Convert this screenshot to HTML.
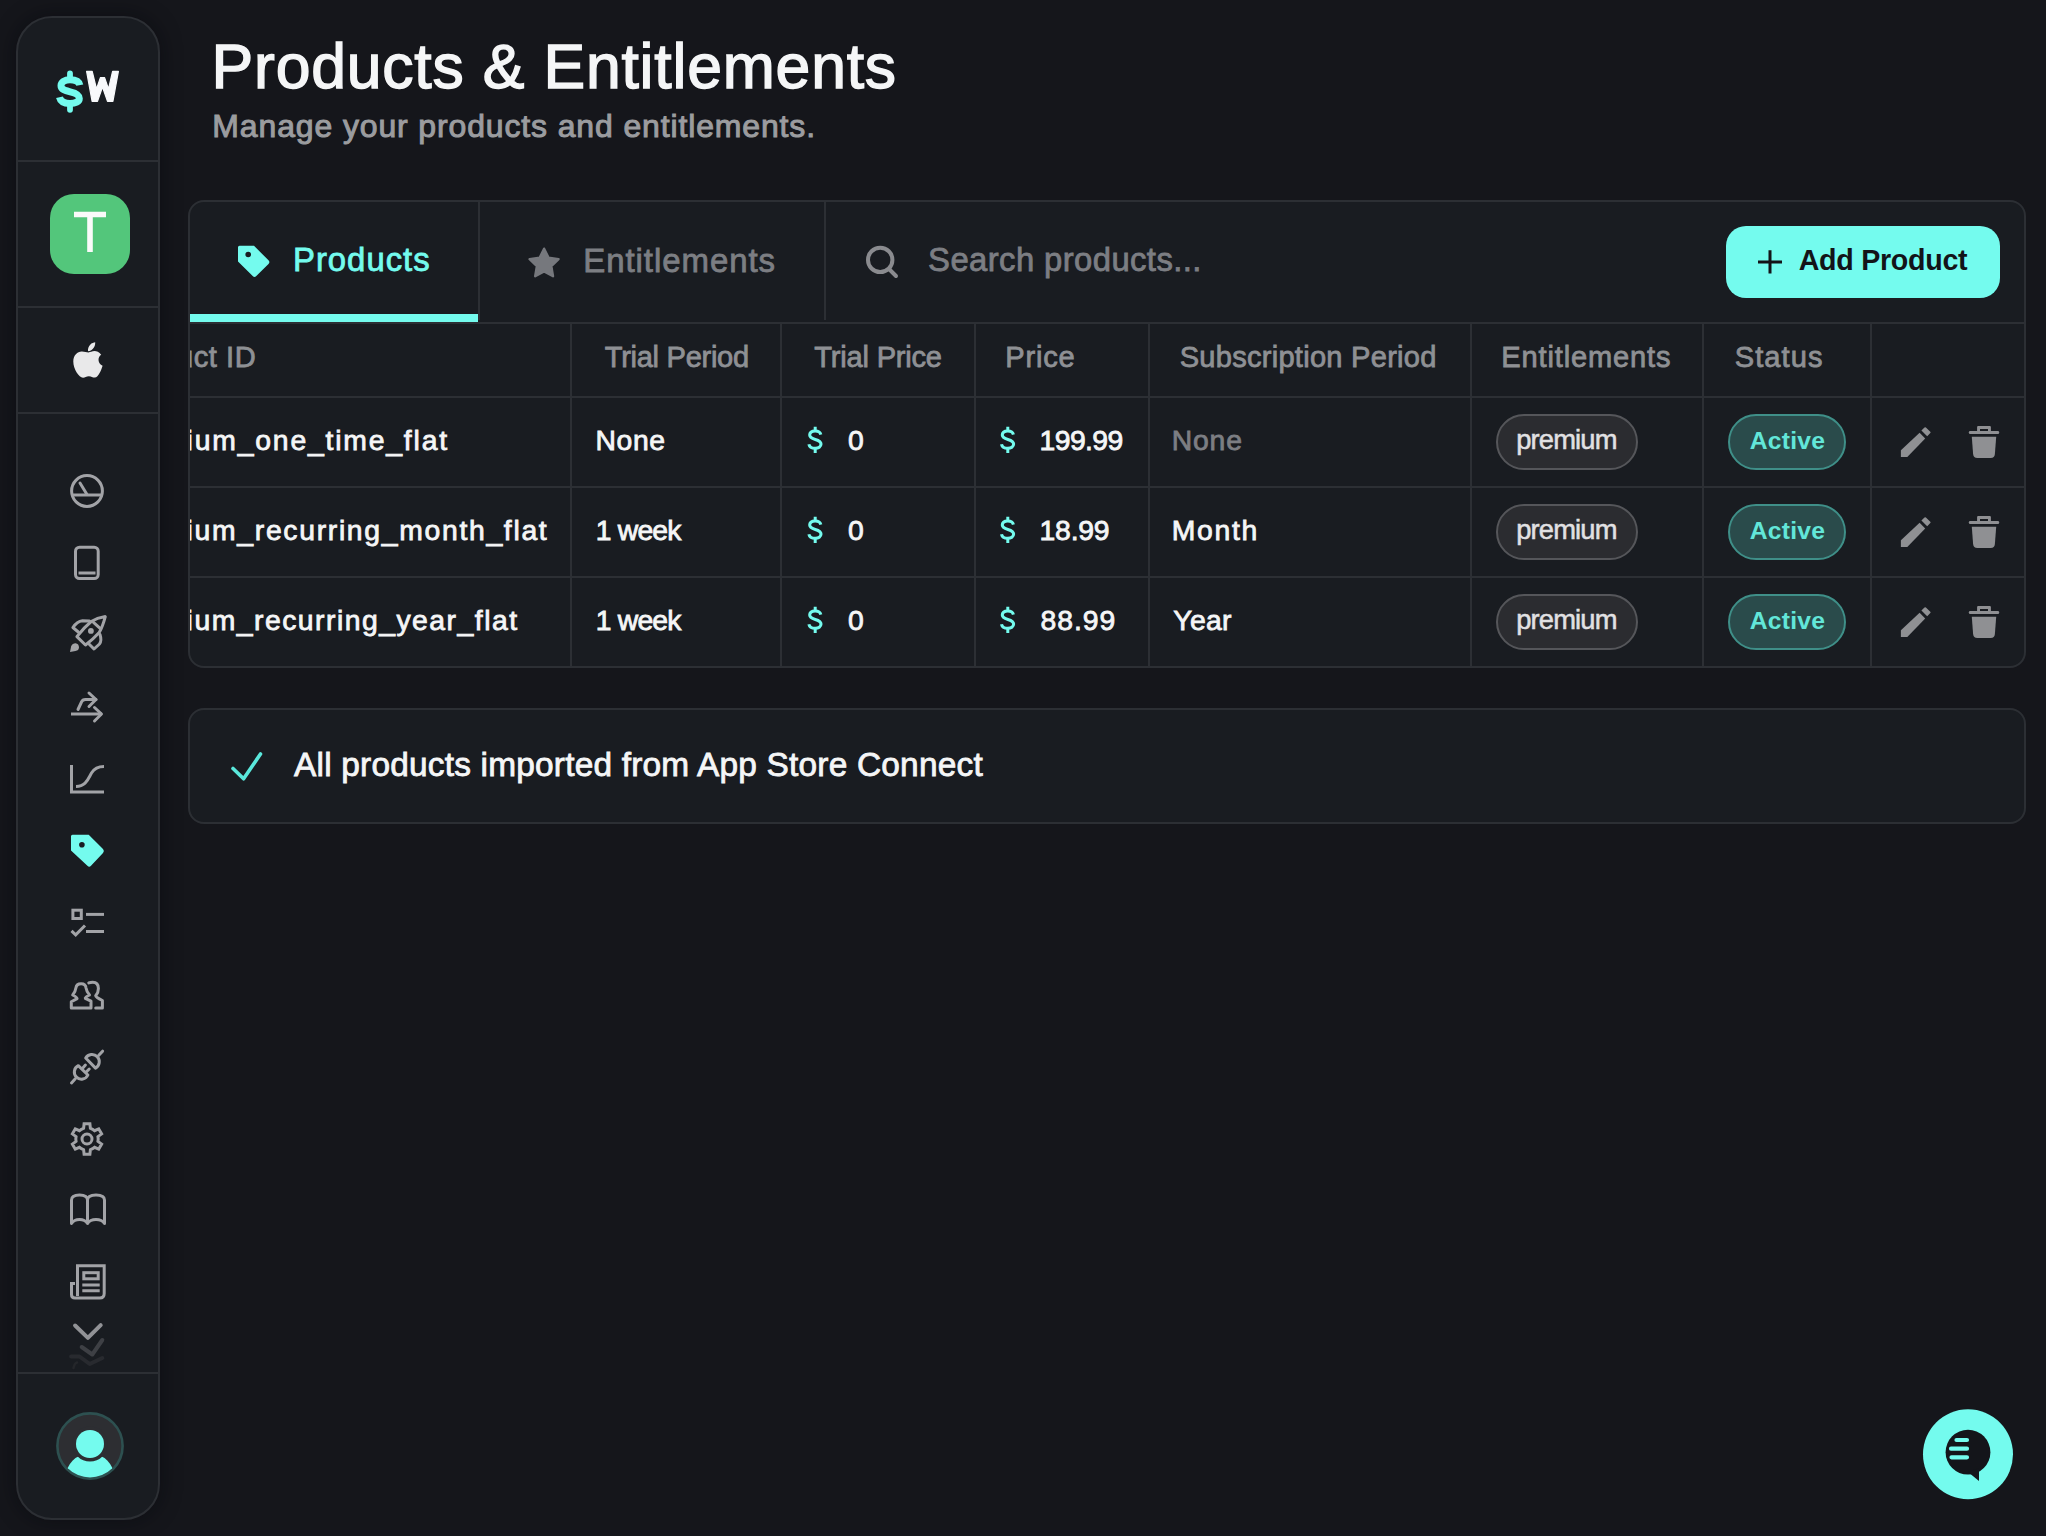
<!DOCTYPE html>
<html><head><meta charset="utf-8"><style>
html,body{margin:0;padding:0;}
body{width:2046px;height:1536px;position:relative;overflow:hidden;background:#15161b;font-family:"Liberation Sans",sans-serif;}
.t{position:absolute;white-space:pre;-webkit-text-stroke:0.8px currentColor;}
</style></head><body>
<div style="position:absolute;left:16px;top:16px;width:144px;height:1504px;box-sizing:border-box;background:#191c21;border:2px solid #2c2f34;border-radius:36px;box-shadow:0 0 20px rgba(6,7,12,0.55);"></div><div style="position:absolute;left:18px;top:160px;width:140px;height:2px;background:#2c2f34;"></div><div style="position:absolute;left:18px;top:306px;width:140px;height:2px;background:#2c2f34;"></div><div style="position:absolute;left:18px;top:412px;width:140px;height:2px;background:#2c2f34;"></div><div style="position:absolute;left:18px;top:1372px;width:140px;height:2px;background:#2c2f34;"></div><svg style="position:absolute;left:0;top:0" width="180" height="1536" viewBox="0 0 180 1536">
<g fill="none" stroke="#a2a3a7" stroke-width="3" stroke-linecap="round" stroke-linejoin="round">
<!-- gauge -->
<circle cx="87" cy="491" r="15.4"/>
<path d="M72,495 H102" stroke-linecap="butt"/>
<path d="M80,483 L87,494.5"/>
<!-- phone -->
<rect x="75.5" y="547.2" width="22.7" height="31.3" rx="4"/>
<path d="M78.5,573 H95.5" stroke-linecap="butt"/>
<!-- rocket -->
<path d="M105.3,616.6 Q97,618 91.2,621.5 Q84,627.5 76.9,636.6 L85.5,645 Q93.5,639 99.2,632.6 Q102.5,627 105.3,616.6 Z"/>
<path d="M93.5,622.3 L100.4,628.6"/>
<path d="M78.3,632 L72.9,627.5 Q77,621.5 82.5,620.8 L89.5,621"/>
<path d="M100,634.5 Q102,640.5 99.5,644 L94,649 L89,644"/>
<!-- arrows split -->
<path d="M71,714 H102" stroke-linecap="butt"/>
<path d="M94.5,707.5 L101.5,714 L94.5,721"/>
<path d="M78,709.5 L81.5,702 Q82.5,699.5 85.5,699.5 H96"/>
<path d="M89,693 L96,699.5 L89,706.5"/>
<!-- chart -->
<path d="M71.5,765 V792 H104" stroke-linecap="butt" stroke-linejoin="miter"/>
<path d="M76,786.5 C86,786.5 88,779 91.5,773 C94.5,768 98,766.5 104,766.5" stroke-linecap="butt"/>
<!-- checklist -->
<rect x="72.9" y="910.2" width="8.4" height="8.3" stroke-linejoin="miter"/>
<path d="M86,914.4 H104" stroke-linecap="butt"/>
<path d="M71.5,930.8 L75.7,934.8 L85,925.5" stroke-linecap="butt" stroke-linejoin="miter"/>
<path d="M86,931.5 H104" stroke-linecap="butt"/>
<!-- users -->
<path d="M71.3,1007.9 V1001.7 L77.1,998.6 Q77.5,997.5 72.7,995 Q75.5,991.5 75.9,987.9 Q76.5,983.7 81.1,983.7 Q85.7,983.7 86,987.9 Q86.5,991.5 89.5,995 Q84.7,997.5 85.3,998.3 L91,1001.2 V1007.9 Z"/>
<path d="M88.8,982.9 Q90.5,982.2 92.7,982.2 Q98.4,982.2 98.4,988.4 Q98.4,992.5 95.7,995.8 Q96,997.5 102.4,1000.5 V1007.9 H95.7"/>
<!-- plug -->
<path d="M102.6,1051.2 L98.8,1055.3"/>
<path d="M85.7,1058 L95.5,1068.1 A7.3,7.3 0 1 0 85.7,1058 Z"/>
<path d="M78.3,1065.7 L87.9,1075 A7.1,7.1 0 1 1 78.3,1065.7 Z"/>
<path d="M82.4,1068.4 L85.4,1065.1"/>
<path d="M86.2,1072 L89.2,1069"/>
<path d="M71.5,1082.9 L75.3,1078.8"/>
<!-- gear -->
<path d="M81.40,1129.30 L83.60,1128.33 L84.10,1123.77 L89.90,1123.77 L90.40,1128.33 L92.60,1129.30 L94.54,1130.72 L98.73,1128.87 L101.64,1133.90 L97.94,1136.61 L98.20,1139.00 L97.94,1141.39 L101.64,1144.10 L98.73,1149.13 L94.54,1147.28 L92.60,1148.70 L90.40,1149.67 L89.90,1154.23 L84.10,1154.23 L83.60,1149.67 L81.40,1148.70 L79.46,1147.28 L75.27,1149.13 L72.36,1144.10 L76.06,1141.39 L75.80,1139.00 L76.06,1136.61 L72.36,1133.90 L75.27,1128.87 L79.46,1130.72 Z" stroke-linejoin="miter"/>
<circle cx="87" cy="1139" r="5"/>
<!-- book -->
<path d="M71.5,1223.5 V1200 Q71.5,1195 79.5,1195 Q87.5,1195 87.5,1200 V1223.5 Q85,1219.5 79.5,1219.5 Q74,1219.5 71.5,1223.5 Z" stroke-linecap="butt"/>
<path d="M87.5,1200 Q87.5,1195 96,1195 Q104.5,1195 104.5,1200 V1223.5 Q102,1219.5 96,1219.5 Q90,1219.5 87.5,1223.5" stroke-linecap="butt"/>
<!-- newspaper -->
<path d="M77.5,1296 V1265.8 H104.2 V1293.5 Q104.2,1298 99.7,1298 H75 Q71.5,1298 71.5,1294.5 V1283.5 H75" stroke-linecap="butt" stroke-linejoin="miter"/>
<rect x="83.8" y="1272.7" width="14.4" height="6.1" stroke-linejoin="miter"/>
<path d="M82.3,1285 H99.7 M82.3,1290.8 H99.7" stroke-linecap="butt"/>
<!-- chevron -->
<path d="M75.1,1325.5 L87.9,1337.9 L100.7,1325.1" stroke-width="4" stroke="#919296"/>
<!-- faded -->
<path d="M81.7,1347 L92.3,1354.5 L102.3,1340" stroke-width="4" stroke="#3e4045"/>
<path d="M71.1,1356.5 H79.5 L89.7,1364 L102.3,1358" stroke-width="4" stroke="#282a2f"/>
<path d="M73.5,1368 Q74.5,1363 77,1362.5" stroke-width="2.5" stroke="#24262a"/>
</g>
<!-- tag (filled) -->
<path d="M72.5,834.8 H88.7 L103,849 Q104.8,851 103,853 L91,865.8 Q89.2,867.5 87.4,865.8 L71,850.5 V836.3 Q71,834.8 72.5,834.8 Z M81.9,844.8 m-2.8,0 a2.8,2.8 0 1 0 5.6,0 a2.8,2.8 0 1 0 -5.6,0 Z" fill="#74fbee" fill-rule="evenodd"/>
<circle cx="90.9" cy="630.9" r="2.9" fill="#a2a3a7"/>
<path d="M70,652 L71.2,646 Q72.5,643 75.5,643.2 Q79,643.8 79,647.5 Q78.8,650.5 75.5,651 Z" fill="#a2a3a7"/>
<!-- apple -->
<g fill="#e9e9ea">
<path d="M95.2,342.3 C95.4,344.9 94.4,347.3 92.9,348.8 C91.5,350.4 89.6,351.3 88,351.1 C87.7,348.7 88.8,346.2 90.2,344.7 C91.7,343.1 93.8,342.4 95.2,342.3 Z"/>
<path d="M88.5,352.4 C90.3,352.4 91.9,351.1 94.6,351.1 C96.4,351.1 99.3,351.9 101.2,354.8 C97.2,357.2 97.7,363.5 102.6,365.8 C101.4,369.6 98.5,377.5 94.8,377.6 C92.6,377.7 91.6,376.2 88.9,376.2 C86.2,376.2 85,377.6 83.1,377.7 C79.2,377.9 73.3,369.5 73.3,361.6 C73.3,355 77.5,351.5 81.6,351.4 C84.5,351.3 86.4,352.4 88.5,352.4 Z"/>
</g>
<!-- green app icon -->
<rect x="50" y="194" width="80" height="80" rx="24" fill="#53c67b"/>
<path d="M74,214.5 H106 M90,214.5 V252" stroke="#fafafa" stroke-width="5.6" fill="none"/>
<!-- logo -->
<path d="M79.8,85.2 C79.2,81.8 75.6,79.8 70,79.8 C64.5,79.8 61,82.2 61,85.8 C61,89.6 65,90.6 70.2,91.8 C75.6,93 79.3,94.5 79.3,98.4 C79.3,101.6 75.5,103.5 70,103.5 C64.3,103.5 60.4,101.3 59.5,97.3" fill="none" stroke="#74fbee" stroke-width="7"/>
<path d="M70,73.5 V80 M70,103 V109.8" fill="none" stroke="#74fbee" stroke-width="5.8" stroke-linecap="round"/>
<path d="M86.6,71.3 L92.2,71.3 L96.5,89 L100.4,77.6 L104.6,77.6 L108.5,89 L112.6,71.3 L118.4,71.3 L112.9,101.3 L107.5,101.3 L102.5,87 L97.5,101.3 L92.1,101.3 Z" fill="#f8f9fb" stroke="#f8f9fb" stroke-width="1.2" stroke-linejoin="round"/>
<!-- avatar -->
<circle cx="90" cy="1446" r="32.6" fill="#2d2e32" stroke="#2d5050" stroke-width="2.6"/>
<clipPath id="avc"><circle cx="90" cy="1446" r="31.5"/></clipPath>
<g clip-path="url(#avc)">
<circle cx="90" cy="1477.7" r="24.4" fill="#74fbee"/>
<circle cx="90" cy="1444" r="17.6" fill="#2d2e32"/>
<circle cx="90" cy="1444" r="14" fill="#74fbee"/>
</g>
</svg><div class="t" style="left:211.54px;top:35.09px;font-size:62.50px;line-height:62.50px;color:#f5f6f7;letter-spacing:0.801px;-webkit-text-stroke:1.4px currentColor;">Products &amp; Entitlements</div><div class="t" style="left:212.36px;top:110.43px;font-size:31.98px;line-height:31.98px;color:#9b9c9f;letter-spacing:0.873px;-webkit-text-stroke:1.0px currentColor;">Manage your products and entitlements.</div><div style="position:absolute;left:188px;top:200px;width:1838px;height:468px;box-sizing:border-box;background:#191c21;border:2px solid #2c2f34;border-radius:16px;overflow:hidden;"><div style="position:absolute;left:288px;top:0px;width:2px;height:118px;background:#2c2f34;"></div><div style="position:absolute;left:634px;top:0px;width:2px;height:118px;background:#2c2f34;"></div><div style="position:absolute;left:0px;top:120px;width:1834px;height:2px;background:#2c2f34;"></div><div style="position:absolute;left:0px;top:112px;width:288px;height:8px;background:#74fbee;"></div><div style="position:absolute;left:0px;top:194px;width:1834px;height:2px;background:#2c2f34;"></div><div style="position:absolute;left:0px;top:284px;width:1834px;height:2px;background:#2c2f34;"></div><div style="position:absolute;left:0px;top:374px;width:1834px;height:2px;background:#2c2f34;"></div><div style="position:absolute;left:380px;top:122px;width:2px;height:342px;background:#2c2f34;"></div><div style="position:absolute;left:590px;top:122px;width:2px;height:342px;background:#2c2f34;"></div><div style="position:absolute;left:784px;top:122px;width:2px;height:342px;background:#2c2f34;"></div><div style="position:absolute;left:958px;top:122px;width:2px;height:342px;background:#2c2f34;"></div><div style="position:absolute;left:1280px;top:122px;width:2px;height:342px;background:#2c2f34;"></div><div style="position:absolute;left:1512px;top:122px;width:2px;height:342px;background:#2c2f34;"></div><div style="position:absolute;left:1680px;top:122px;width:2px;height:342px;background:#2c2f34;"></div><div class="t" style="left:102.99px;top:42.19px;font-size:32.85px;line-height:32.85px;color:#74fbee;letter-spacing:1.013px;">Products</div><div class="t" style="left:393.28px;top:42.07px;font-size:32.99px;line-height:32.99px;color:#7c7e83;letter-spacing:0.939px;">Entitlements</div><div class="t" style="left:738.12px;top:41.99px;font-size:32.85px;line-height:32.85px;color:#7c7e83;letter-spacing:0.404px;">Search products...</div><div style="position:absolute;left:1536px;top:24px;width:274px;height:72px;background:#74fbee;border-radius:20px;"></div><div class="t" style="left:1608.68px;top:43.76px;font-size:28.63px;line-height:28.63px;color:#131418;letter-spacing:-0.283px;font-weight:700;-webkit-text-stroke:0;">Add Product</div><div class="t" style="left:-13.09px;top:141.39px;font-size:29.07px;line-height:29.07px;color:#8e9094;letter-spacing:0.565px;">uct ID</div><div class="t" style="left:414.75px;top:141.39px;font-size:29.07px;line-height:29.07px;color:#8e9094;letter-spacing:-0.287px;">Trial Period</div><div class="t" style="left:624.35px;top:141.39px;font-size:29.07px;line-height:29.07px;color:#8e9094;letter-spacing:-0.203px;">Trial Price</div><div class="t" style="left:815.30px;top:141.39px;font-size:29.07px;line-height:29.07px;color:#8e9094;letter-spacing:0.782px;">Price</div><div class="t" style="left:989.69px;top:141.39px;font-size:29.07px;line-height:29.07px;color:#8e9094;letter-spacing:0.261px;">Subscription Period</div><div class="t" style="left:1311.30px;top:141.39px;font-size:29.07px;line-height:29.07px;color:#8e9094;letter-spacing:0.851px;">Entitlements</div><div class="t" style="left:1544.69px;top:141.39px;font-size:29.07px;line-height:29.07px;color:#8e9094;letter-spacing:1.083px;">Status</div><div class="t" style="left:-3.41px;top:224.01px;font-size:28.34px;line-height:28.34px;color:#f5f6f7;letter-spacing:1.812px;">ium_one_time_flat</div><div class="t" style="left:405.56px;top:224.01px;font-size:28.34px;line-height:28.34px;color:#f5f6f7;letter-spacing:0.568px;">None</div><div class="t" style="left:658.07px;top:224.01px;font-size:28.34px;line-height:28.34px;color:#f5f6f7;letter-spacing:0.000px;">0</div><div class="t" style="left:849.57px;top:224.01px;font-size:28.34px;line-height:28.34px;color:#f5f6f7;letter-spacing:-0.592px;">199.99</div><div class="t" style="left:981.66px;top:224.01px;font-size:28.34px;line-height:28.34px;color:#7c7e83;letter-spacing:0.868px;">None</div><div style="position:absolute;left:1306px;top:212px;width:142px;height:56px;box-sizing:border-box;background:#2b2c30;border:2px solid #55565a;border-radius:28px;"></div><div class="t" style="left:1326.22px;top:224.17px;font-size:27.33px;line-height:27.33px;color:#e1e1e3;letter-spacing:-0.841px;-webkit-text-stroke:0.5px currentColor;">premium</div><div style="position:absolute;left:1538px;top:212px;width:118px;height:56px;box-sizing:border-box;background:#2a4b4b;border:2px solid #3f8f88;border-radius:28px;"></div><div class="t" style="left:1559.78px;top:227.08px;font-size:24.71px;line-height:24.71px;color:#62e6d9;letter-spacing:0.219px;font-weight:700;-webkit-text-stroke:0;">Active</div><div class="t" style="left:-3.41px;top:314.01px;font-size:28.34px;line-height:28.34px;color:#f5f6f7;letter-spacing:1.692px;">ium_recurring_month_flat</div><div class="t" style="left:405.77px;top:314.01px;font-size:28.34px;line-height:28.34px;color:#f5f6f7;letter-spacing:-0.810px;">1 week</div><div class="t" style="left:658.07px;top:314.01px;font-size:28.34px;line-height:28.34px;color:#f5f6f7;letter-spacing:0.000px;">0</div><div class="t" style="left:849.57px;top:314.01px;font-size:28.34px;line-height:28.34px;color:#f5f6f7;letter-spacing:-0.207px;">18.99</div><div class="t" style="left:981.66px;top:314.01px;font-size:28.34px;line-height:28.34px;color:#f5f6f7;letter-spacing:1.722px;">Month</div><div style="position:absolute;left:1306px;top:302px;width:142px;height:56px;box-sizing:border-box;background:#2b2c30;border:2px solid #55565a;border-radius:28px;"></div><div class="t" style="left:1326.22px;top:314.17px;font-size:27.33px;line-height:27.33px;color:#e1e1e3;letter-spacing:-0.841px;-webkit-text-stroke:0.5px currentColor;">premium</div><div style="position:absolute;left:1538px;top:302px;width:118px;height:56px;box-sizing:border-box;background:#2a4b4b;border:2px solid #3f8f88;border-radius:28px;"></div><div class="t" style="left:1559.78px;top:317.08px;font-size:24.71px;line-height:24.71px;color:#62e6d9;letter-spacing:0.219px;font-weight:700;-webkit-text-stroke:0;">Active</div><div class="t" style="left:-3.41px;top:404.01px;font-size:28.34px;line-height:28.34px;color:#f5f6f7;letter-spacing:1.495px;">ium_recurring_year_flat</div><div class="t" style="left:405.77px;top:404.01px;font-size:28.34px;line-height:28.34px;color:#f5f6f7;letter-spacing:-0.810px;">1 week</div><div class="t" style="left:658.07px;top:404.01px;font-size:28.34px;line-height:28.34px;color:#f5f6f7;letter-spacing:0.000px;">0</div><div class="t" style="left:850.50px;top:404.01px;font-size:28.34px;line-height:28.34px;color:#f5f6f7;letter-spacing:0.963px;">88.99</div><div class="t" style="left:983.36px;top:404.01px;font-size:28.34px;line-height:28.34px;color:#f5f6f7;letter-spacing:0.270px;">Year</div><div style="position:absolute;left:1306px;top:392px;width:142px;height:56px;box-sizing:border-box;background:#2b2c30;border:2px solid #55565a;border-radius:28px;"></div><div class="t" style="left:1326.22px;top:404.17px;font-size:27.33px;line-height:27.33px;color:#e1e1e3;letter-spacing:-0.841px;-webkit-text-stroke:0.5px currentColor;">premium</div><div style="position:absolute;left:1538px;top:392px;width:118px;height:56px;box-sizing:border-box;background:#2a4b4b;border:2px solid #3f8f88;border-radius:28px;"></div><div class="t" style="left:1559.78px;top:407.08px;font-size:24.71px;line-height:24.71px;color:#62e6d9;letter-spacing:0.219px;font-weight:700;-webkit-text-stroke:0;">Active</div></div><svg style="position:absolute;left:0;top:0" width="2046" height="700" viewBox="0 0 2046 700"><g transform="translate(0,0)" fill="#8f9093"><path d="M1900.9,450.3 L1919.6,432.7 L1925.2,438.5 L1907.3,457 L1900.9,457 Z"/><path d="M1921.4,430.6 L1924.5,427.5 Q1925.2,426.8 1925.9,427.5 L1930.3,431.7 Q1931,432.4 1930.3,433.1 L1927.2,436.2 Z"/><path d="M1969.5,431 H1998.5 Q2000.2,432.5 1998.5,434 H1969.5 Q1967.8,432.5 1969.5,431 Z"/><path d="M1977.1,431.5 V427 Q1977.1,425.9 1978.2,425.9 H1989.8 Q1990.9,425.9 1990.9,427 V431.5 H1988 V428.9 H1980 V431.5 Z"/><path d="M1971.8,436.8 H1996.2 L1994.9,454 Q1994.6,457.9 1990.7,457.9 H1977.3 Q1973.4,457.9 1973.1,454 Z"/></g><g transform="translate(0,90)" fill="#8f9093"><path d="M1900.9,450.3 L1919.6,432.7 L1925.2,438.5 L1907.3,457 L1900.9,457 Z"/><path d="M1921.4,430.6 L1924.5,427.5 Q1925.2,426.8 1925.9,427.5 L1930.3,431.7 Q1931,432.4 1930.3,433.1 L1927.2,436.2 Z"/><path d="M1969.5,431 H1998.5 Q2000.2,432.5 1998.5,434 H1969.5 Q1967.8,432.5 1969.5,431 Z"/><path d="M1977.1,431.5 V427 Q1977.1,425.9 1978.2,425.9 H1989.8 Q1990.9,425.9 1990.9,427 V431.5 H1988 V428.9 H1980 V431.5 Z"/><path d="M1971.8,436.8 H1996.2 L1994.9,454 Q1994.6,457.9 1990.7,457.9 H1977.3 Q1973.4,457.9 1973.1,454 Z"/></g><g transform="translate(0,180)" fill="#8f9093"><path d="M1900.9,450.3 L1919.6,432.7 L1925.2,438.5 L1907.3,457 L1900.9,457 Z"/><path d="M1921.4,430.6 L1924.5,427.5 Q1925.2,426.8 1925.9,427.5 L1930.3,431.7 Q1931,432.4 1930.3,433.1 L1927.2,436.2 Z"/><path d="M1969.5,431 H1998.5 Q2000.2,432.5 1998.5,434 H1969.5 Q1967.8,432.5 1969.5,431 Z"/><path d="M1977.1,431.5 V427 Q1977.1,425.9 1978.2,425.9 H1989.8 Q1990.9,425.9 1990.9,427 V431.5 H1988 V428.9 H1980 V431.5 Z"/><path d="M1971.8,436.8 H1996.2 L1994.9,454 Q1994.6,457.9 1990.7,457.9 H1977.3 Q1973.4,457.9 1973.1,454 Z"/></g><g transform="translate(0,0)" fill="none" stroke="#74fbee" stroke-width="3.1"><path d="M820.8,434.6 C820.3,432.3 818.2,431 815.2,431 C811.8,431 809.7,432.6 809.7,435.1 C809.7,437.7 812,438.5 815.3,439.4 C818.7,440.3 821,441.4 821,444.1 C821,446.7 818.5,448.3 815.2,448.3 C811.7,448.3 809.4,446.8 808.9,444.2"/><path d="M815.2,426.8 V431 M815.2,448.3 V453" stroke-width="3"/></g><g transform="translate(192.6,0)" fill="none" stroke="#74fbee" stroke-width="3.1"><path d="M820.8,434.6 C820.3,432.3 818.2,431 815.2,431 C811.8,431 809.7,432.6 809.7,435.1 C809.7,437.7 812,438.5 815.3,439.4 C818.7,440.3 821,441.4 821,444.1 C821,446.7 818.5,448.3 815.2,448.3 C811.7,448.3 809.4,446.8 808.9,444.2"/><path d="M815.2,426.8 V431 M815.2,448.3 V453" stroke-width="3"/></g><g transform="translate(0,90)" fill="none" stroke="#74fbee" stroke-width="3.1"><path d="M820.8,434.6 C820.3,432.3 818.2,431 815.2,431 C811.8,431 809.7,432.6 809.7,435.1 C809.7,437.7 812,438.5 815.3,439.4 C818.7,440.3 821,441.4 821,444.1 C821,446.7 818.5,448.3 815.2,448.3 C811.7,448.3 809.4,446.8 808.9,444.2"/><path d="M815.2,426.8 V431 M815.2,448.3 V453" stroke-width="3"/></g><g transform="translate(192.6,90)" fill="none" stroke="#74fbee" stroke-width="3.1"><path d="M820.8,434.6 C820.3,432.3 818.2,431 815.2,431 C811.8,431 809.7,432.6 809.7,435.1 C809.7,437.7 812,438.5 815.3,439.4 C818.7,440.3 821,441.4 821,444.1 C821,446.7 818.5,448.3 815.2,448.3 C811.7,448.3 809.4,446.8 808.9,444.2"/><path d="M815.2,426.8 V431 M815.2,448.3 V453" stroke-width="3"/></g><g transform="translate(0,180)" fill="none" stroke="#74fbee" stroke-width="3.1"><path d="M820.8,434.6 C820.3,432.3 818.2,431 815.2,431 C811.8,431 809.7,432.6 809.7,435.1 C809.7,437.7 812,438.5 815.3,439.4 C818.7,440.3 821,441.4 821,444.1 C821,446.7 818.5,448.3 815.2,448.3 C811.7,448.3 809.4,446.8 808.9,444.2"/><path d="M815.2,426.8 V431 M815.2,448.3 V453" stroke-width="3"/></g><g transform="translate(192.6,180)" fill="none" stroke="#74fbee" stroke-width="3.1"><path d="M820.8,434.6 C820.3,432.3 818.2,431 815.2,431 C811.8,431 809.7,432.6 809.7,435.1 C809.7,437.7 812,438.5 815.3,439.4 C818.7,440.3 821,441.4 821,444.1 C821,446.7 818.5,448.3 815.2,448.3 C811.7,448.3 809.4,446.8 808.9,444.2"/><path d="M815.2,426.8 V431 M815.2,448.3 V453" stroke-width="3"/></g><path d="M239.5,245.8 H254 L268.5,260.3 Q270.3,262.1 268.5,263.9 L256.3,276.1 Q254.5,277.9 252.7,276.1 L238,261.4 V247.3 Q238,245.8 239.5,245.8 Z M248.2,254.5 m-2.8,0 a2.8,2.8 0 1 0 5.6,0 a2.8,2.8 0 1 0 -5.6,0 Z" fill="#74fbee" fill-rule="evenodd"/><path d="M544.10,248.70 L548.57,257.75 L558.56,259.20 L551.33,266.25 L553.03,276.20 L544.10,271.50 L535.17,276.20 L536.87,266.25 L529.64,259.20 L539.63,257.75 Z" fill="#76787d" stroke="#76787d" stroke-width="2.4" stroke-linejoin="round"/><circle cx="880.2" cy="259.9" r="12.2" fill="none" stroke="#8a8b8f" stroke-width="4"/><path d="M889.5,269.5 L896,276" stroke="#8a8b8f" stroke-width="4" stroke-linecap="round"/><path d="M1758,262 H1782 M1770,250.2 V273.6" stroke="#131418" stroke-width="3"/></svg><div style="position:absolute;left:188px;top:708px;width:1838px;height:116px;box-sizing:border-box;background:#191c21;border:2px solid #2c2f34;border-radius:16px;"></div><svg style="position:absolute;left:0;top:700px" width="300" height="100" viewBox="0 700 300 100"><path d="M233,768.5 L243.6,778.8 L260.5,754" fill="none" stroke="#5ae8dc" stroke-width="3.6" stroke-linecap="round" stroke-linejoin="round"/></svg><div class="t" style="left:294.02px;top:747.70px;font-size:33.43px;line-height:33.43px;color:#f5f6f7;letter-spacing:0.204px;">All products imported from App Store Connect</div><svg style="position:absolute;left:1900px;top:1390px" width="140" height="130" viewBox="1900 1390 140 130">
<circle cx="1968" cy="1454.2" r="45" fill="#74fbee"/>
<circle cx="1968" cy="1452.2" r="22.4" fill="#14151a"/>
<path d="M1968,1472 L1979,1481 L1979,1468 Z" fill="#14151a"/>
<path d="M1956.5,1440 H1967 M1951,1448.7 H1967 M1951.5,1457.3 H1967" stroke="#74fbee" stroke-width="4.2" stroke-linecap="round"/>
</svg>
</body></html>
